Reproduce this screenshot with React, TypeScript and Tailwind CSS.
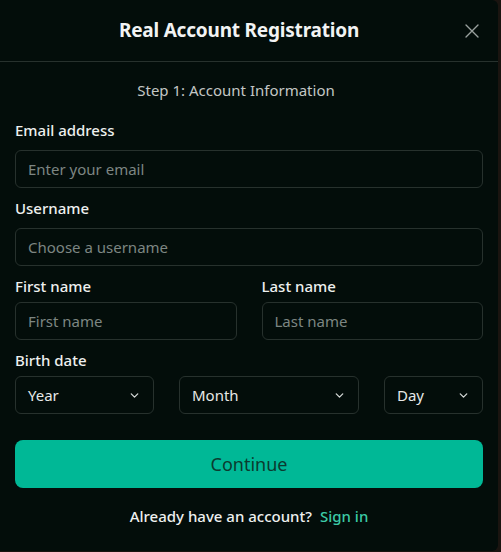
import React from "react";

function Chevron() {
  return (
    <svg width="13" height="13" viewBox="0 0 24 24" fill="none" stroke="#d4d8d6" strokeWidth="2.4" strokeLinecap="round" strokeLinejoin="round">
      <path d="M6 9l6 6 6-6" />
    </svg>
  );
}

function Select({ label, className }: { label: string; className: string }) {
  return (
    <div className={`h-[38px] rounded-[6px] border border-[#27312d] flex items-center justify-between pl-3 pr-3 ${className}`}>
      <span className="text-[15px] text-[#e6e8e7]">{label}</span>
      <Chevron />
    </div>
  );
}

function Input({ placeholder }: { placeholder: string }) {
  return (
    <div className="h-[38px] rounded-[6px] border border-[#27312d] flex items-center px-3">
      <span className="text-[15px] text-[#7d8682]">{placeholder}</span>
    </div>
  );
}

export default function App() {
  return (
    <div
      className="w-[501px] h-[552px] bg-[#1a1410]"
      style={{ fontFamily: '"Noto Sans", "Open Sans", sans-serif' }}
    >
      <div className="w-[498px] h-[551px] bg-[#030d0a] rounded-r-[6px] flex flex-col">
        <div className="h-[62px] border-b border-[#27312d] flex items-center shrink-0 pl-[15px] pr-[17px]">
          <h1 className="flex-1 text-center text-[19px] font-bold text-[#f2f3f3] tracking-[-0.2px]">Real Account Registration</h1>
          <button className="text-[#9aa19e]">
            <svg width="18" height="18" viewBox="0 0 24 24" fill="none" stroke="currentColor" strokeWidth="1.8" strokeLinecap="round">
              <path d="M4 4l16 16M20 4L4 20" />
            </svg>
          </button>
        </div>
        <div className="px-[15px] flex flex-col">
          <p className="text-center text-[15px] text-[#c3c7c5] mt-[17px] leading-[22px] pr-[26px]">Step 1: Account Information</p>
          <label className="mt-[18px] text-[15px] font-medium text-[#eef0ef] leading-[22px]">Email address</label>
          <div className="mt-[9px]"><Input placeholder="Enter your email" /></div>
          <label className="mt-[9px] text-[15px] font-medium text-[#eef0ef] leading-[22px]">Username</label>
          <div className="mt-[9px]"><Input placeholder="Choose a username" /></div>
          <div className="mt-[9px] grid grid-cols-2 gap-[25px]">
            <div className="flex flex-col">
              <label className="text-[15px] font-medium text-[#eef0ef] leading-[22px]">First name</label>
              <div className="mt-[5px]"><Input placeholder="First name" /></div>
            </div>
            <div className="flex flex-col">
              <label className="text-[15px] font-medium text-[#eef0ef] leading-[22px]">Last name</label>
              <div className="mt-[5px]"><Input placeholder="Last name" /></div>
            </div>
          </div>
          <label className="mt-[9px] text-[15px] font-medium text-[#eef0ef] leading-[22px]">Birth date</label>
          <div className="mt-[5px] flex gap-[25px]">
            <Select label="Year" className="w-[139px]" />
            <Select label="Month" className="w-[180px]" />
            <Select label="Day" className="flex-1" />
          </div>
          <button className="mt-[26px] h-[48px] rounded-[8px] bg-[#00b896] text-[18px] text-[#0b3b2f]">Continue</button>
          <p className="mt-[17px] text-center text-[15px] font-medium text-[#eef0ef]">
            Already have an account?<span className="ml-[8px] text-[#3ccaa6]">Sign in</span>
          </p>
        </div>
      </div>
    </div>
  );
}
